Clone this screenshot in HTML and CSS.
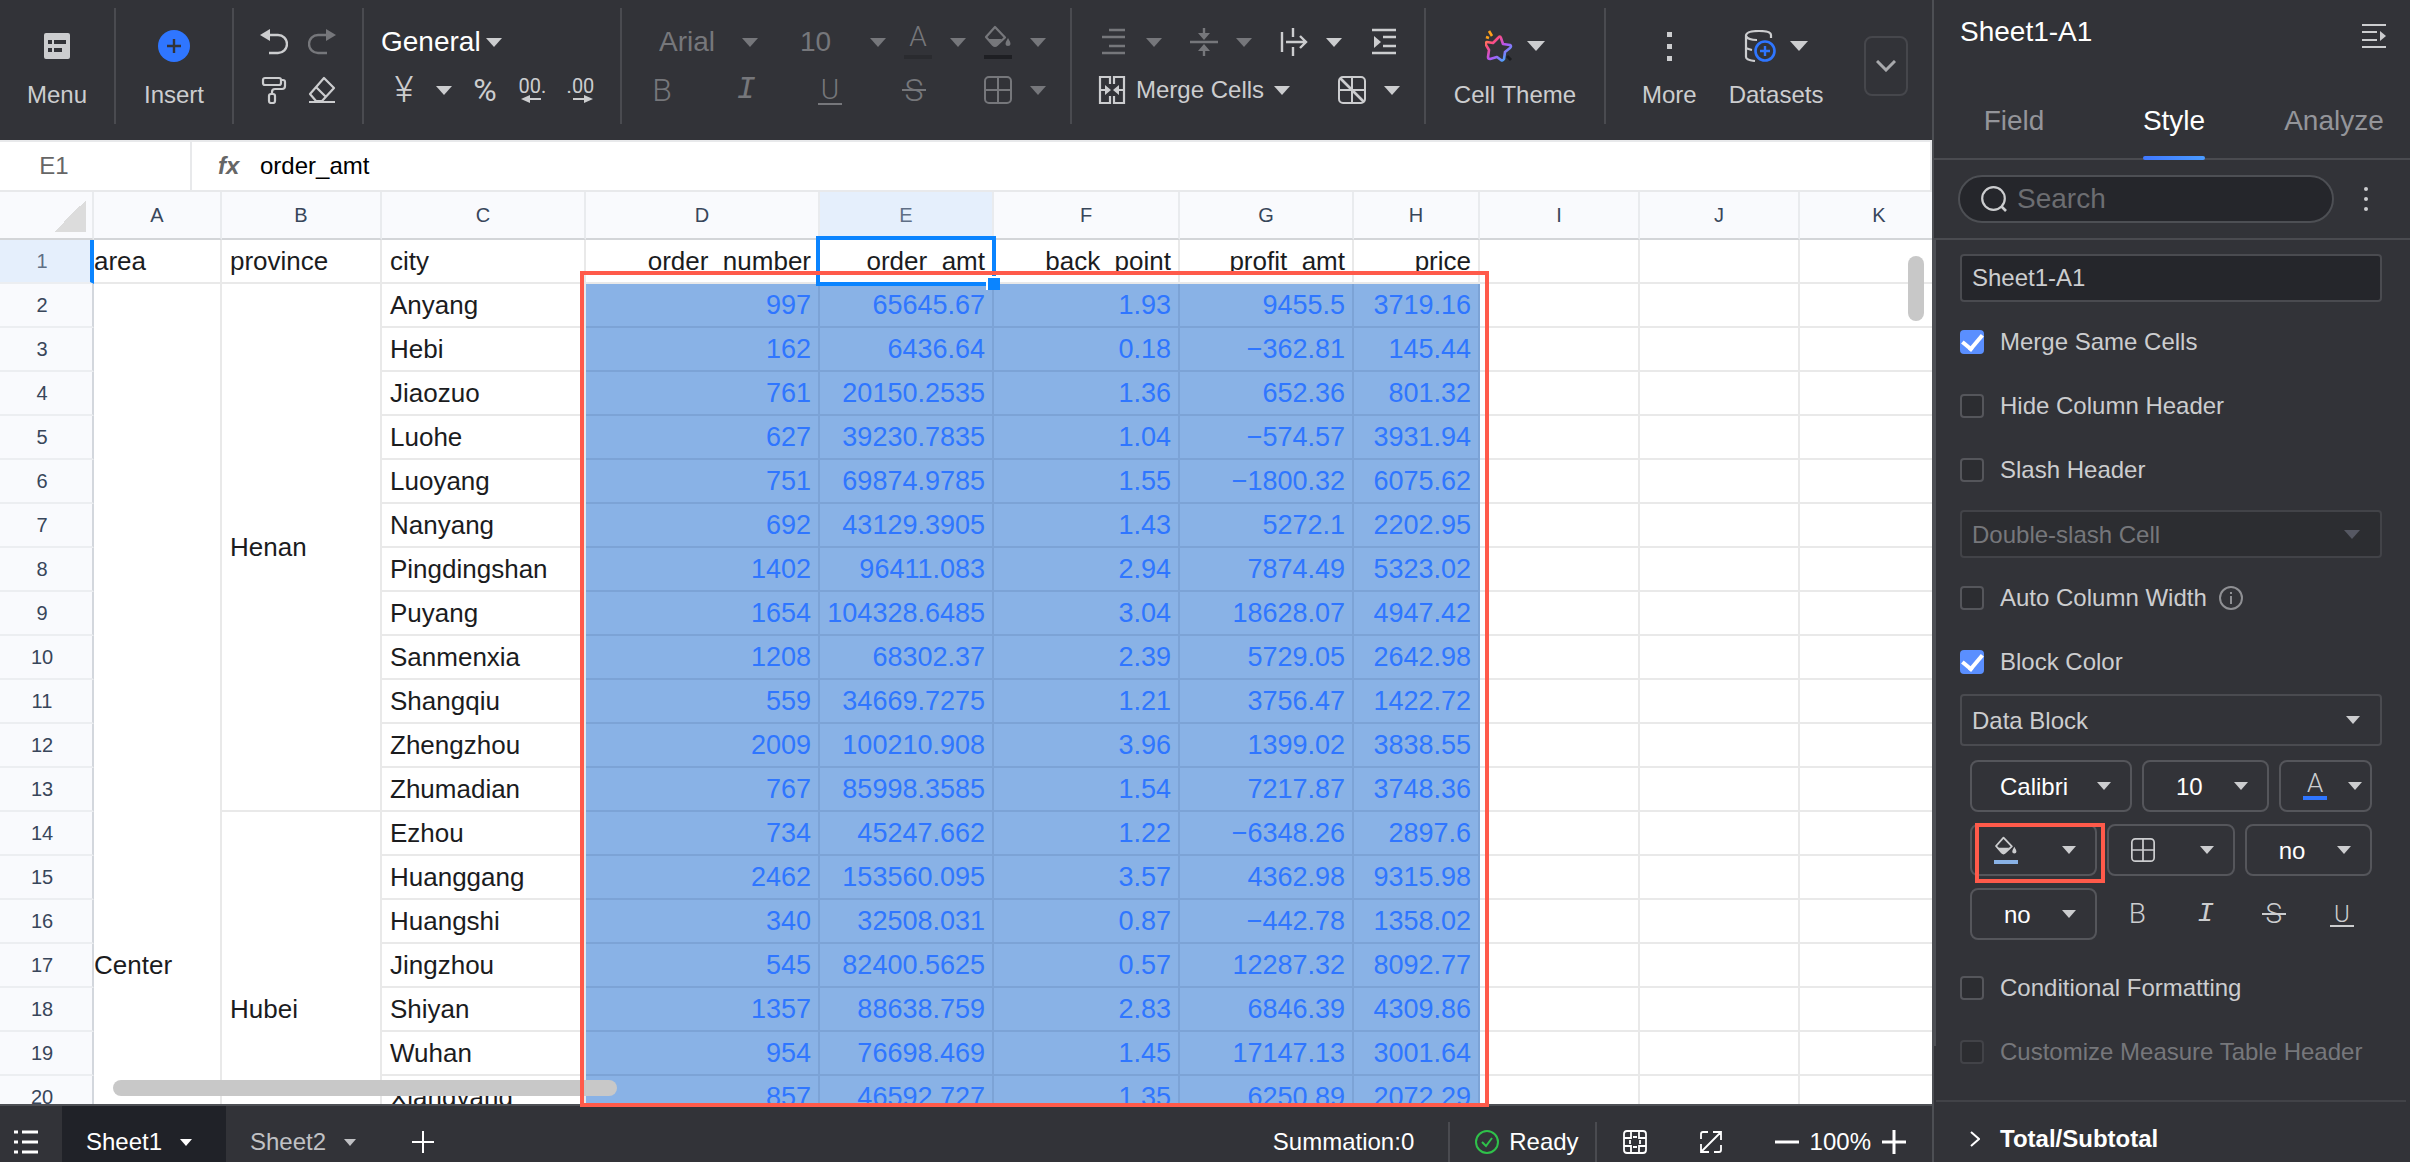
FILE: index.html
```html
<!DOCTYPE html>
<html lang="en">
<head>
    <meta charset="UTF-8">
    <meta name="viewport" content="width=device-width, initial-scale=1.0">
    <title>Sheet1</title>
    <link rel="stylesheet" href="styles.css">
</head>
<body>

    <!-- icon sprite -->
    <svg class="sprite" aria-hidden="true">
        <symbol id="i-menu" viewBox="0 0 28 28"><path fill="currentColor" fill-rule="evenodd" d="M3 1h22a2 2 0 0 1 2 2v22a2 2 0 0 1-2 2H3a2 2 0 0 1-2-2V3a2 2 0 0 1 2-2zM5 8v4h4V8zm6 0v4h12V8zM5 16v4h4v-4zm6 0v4h8v-4z"/></symbol>
        <symbol id="i-insert" viewBox="0 0 32 32"><circle cx="16" cy="16" r="16" fill="#2f76ff"/><path d="M16 9v14M9 16h14" stroke="#323338" stroke-width="2.4"/></symbol>
        <symbol id="i-undo" viewBox="0 0 28 28"><path d="M4 7h14a8.500 8.500 0 0 1 0 18h-9" fill="none" stroke="currentColor" stroke-width="2.4"/><path d="M0 7l10-6v12z" fill="currentColor"/></symbol>
        <symbol id="i-paint" viewBox="0 0 28 28"><g fill="none" stroke="currentColor" stroke-width="2.2"><rect x="3" y="2" width="18" height="7" rx="2"/><path d="M21 4h2q2 0 2 2v4q0 3-3 3h-7q-3 0-3 3v2"/><rect x="9" y="18" width="6" height="9" rx="2"/></g></symbol>
        <symbol id="i-eraser" viewBox="0 0 28 28"><g fill="none" stroke="currentColor" stroke-width="2.2" stroke-linejoin="round"><path d="M16 2l10 10-12 13H8l-6-7zM8 11l10 10M1 26h26"/></g></symbol>
        <symbol id="i-left" viewBox="0 0 28 8"><path d="M2 4l9-4v3h11v2H11v3z" fill="currentColor"/></symbol>
        <symbol id="i-right" viewBox="0 0 28 8"><path d="M26 4L17 0v3H6v2h11v3z" fill="currentColor"/></symbol>
        <symbol id="i-bucket" viewBox="0 0 28 24"><path d="M11 2l10 10.500-8 7.500q-2 2-4 0l-7-8z" fill="none" stroke="currentColor" stroke-width="2.200" stroke-linejoin="round"/><path d="M4 14h14l-5 6q-2 2-4 0zM24 13q5 8 0 8t0-8z" fill="currentColor"/></symbol>
        <symbol id="i-grid" viewBox="0 0 28 28"><path d="M5 1h18a4 4 0 0 1 4 4v18a4 4 0 0 1-4 4H5a4 4 0 0 1-4-4V5a4 4 0 0 1 4-4zM14 1v26M1 14h26" fill="none" stroke="currentColor" stroke-width="2"/></symbol>
        <symbol id="i-slash" viewBox="0 0 28 28"><use href="#i-grid"/><path d="M2 2l24 24" stroke="currentColor" stroke-width="2.600"/></symbol>
        <symbol id="i-align" viewBox="0 0 28 28"><path d="M9 2h16M2 9h23M9 18h16M2 25h23" stroke="currentColor" stroke-width="2.400"/></symbol>
        <symbol id="i-valign" viewBox="0 0 28 28"><path d="M0 14h28M14 0v6M14 22v6" stroke="currentColor" stroke-width="2.400"/><path d="M8 5h12l-6 7zM8 23h12l-6-7z" fill="currentColor"/></symbol>
        <symbol id="i-overflow" viewBox="0 0 28 28"><path d="M2 4v20M13 0v9M13 19v9M6 14h20M20 8l6 6-6 6" fill="none" stroke="currentColor" stroke-width="2.400"/></symbol>
        <symbol id="i-indent" viewBox="0 0 28 28"><path d="M2 2h24M13 9h13M13 18h13M2 25h24" stroke="currentColor" stroke-width="2.400"/><path d="M4 8l7 6-7 6z" fill="currentColor"/></symbol>
        <symbol id="i-merge" viewBox="0 0 28 28"><path d="M12 8V1H2v26h10v-7M16 8V1h10v26H16v-7M2 14h6M20 14h6" fill="none" stroke="currentColor" stroke-width="2.200"/><path d="M7 9l6 5-6 5zM21 9l-6 5 6 5z" fill="currentColor"/></symbol>
        <symbol id="i-theme" viewBox="0 0 28 32"><defs><linearGradient id="star" x1="0" y1="0" x2="1" y2="1"><stop offset="0" stop-color="#ff9a3c"/><stop offset=".25" stop-color="#ff4d7d"/><stop offset=".55" stop-color="#b455f5"/><stop offset="1" stop-color="#22c4ff"/></linearGradient></defs><path d="M13 8q2-3 3 0l2 6 7 1q2 1 0 3l-5 4-1 7q-1 2-3 1l-4-3-7 2q-2 0-2-2l1-7-3-5q-1-2 1-3l6 1z" fill="none" stroke="url(#star)" stroke-width="2.600" stroke-linejoin="round"/><path d="M4 1l3 5M1 7l3 1" stroke="#ffa21a" stroke-width="2.600"/><path d="M22 26l4 4" stroke="#1c1d20" stroke-width="3"/></symbol>
        <symbol id="i-data" viewBox="0 0 32 32"><g fill="none" stroke="currentColor" stroke-width="2.200"><path d="M27 8V5q0-4-12-4T2 5v22q0 3 9 4M2 6q2 4 11 4M2 18q2 1 6 2"/></g><circle cx="21" cy="21" r="9.500" fill="#323338" stroke="#2f76ff" stroke-width="2.600"/><path d="M21 16v10M16 21h10" stroke="#2f76ff" stroke-width="2.400"/></symbol>
        <symbol id="i-dots" viewBox="0 0 32 32"><path d="M14 2h5v5h-5zM14 14h5v5h-5zM14 26h5v5h-5z" fill="currentColor"/></symbol>
        <symbol id="i-chevron" viewBox="0 0 20 12"><path d="M1 1l9 9 9-9" fill="none" stroke="currentColor" stroke-width="3"/></symbol>
        <symbol id="i-next" viewBox="0 0 10 16"><path d="M1 1l8 7-8 7" fill="none" stroke="currentColor" stroke-width="2"/></symbol>
        <symbol id="i-fold" viewBox="0 0 24 24"><path d="M0 1h24M0 8h15M0 16h15M0 23h24" stroke="currentColor" stroke-width="2"/><path d="M18 7l6 5-6 5z" fill="currentColor"/></symbol>
        <symbol id="i-search" viewBox="0 0 26 26"><path d="M20 20l5 5" stroke="currentColor" stroke-width="2.600"/><circle cx="12.500" cy="12.500" r="11.300" fill="none" stroke="currentColor" stroke-width="2.200"/></symbol>
        <symbol id="i-vdots" viewBox="0 0 8 24"><circle cx="4" cy="2" r="2" fill="currentColor"/><circle cx="4" cy="12" r="2" fill="currentColor"/><circle cx="4" cy="22" r="2" fill="currentColor"/></symbol>
        <symbol id="i-info" viewBox="0 0 24 24"><circle cx="12" cy="12" r="11" fill="none" stroke="currentColor" stroke-width="2"/><path d="M12 6v2M12 10v8" stroke="currentColor" stroke-width="2"/></symbol>
        <symbol id="i-list" viewBox="0 0 24 24"><path d="M0 2h4M8 2h16M0 12h4M8 12h16M0 22h4M8 22h16" stroke="currentColor" stroke-width="3"/></symbol>
        <symbol id="i-plus" viewBox="0 0 24 24"><path d="M12 1v22M1 12h22" stroke="currentColor" stroke-width="2"/></symbol>
        <symbol id="i-more" viewBox="0 0 24 24"><path d="M12 0v24M0 12h24" stroke="currentColor" stroke-width="3"/></symbol>
        <symbol id="i-minus" viewBox="0 0 24 24"><path d="M0 12h24" stroke="currentColor" stroke-width="3"/></symbol>
        <symbol id="i-ok" viewBox="0 0 24 24"><path d="M7 12l4 4 6-8" fill="none" stroke="currentColor" stroke-width="2"/><circle cx="12" cy="12" r="11" fill="none" stroke="currentColor" stroke-width="2"/></symbol>
        <symbol id="i-freeze" viewBox="0 0 24 24"><path d="M4 1h16q3 0 3 3v16q0 3-3 3H4q-3 0-3-3V4q0-3 3-3zM8 1v7H1M16 1v7h7M8 23v-7H1M16 23v-7h7M10 7h4M10 17h4M7 10v4M17 10v4" fill="none" stroke="currentColor" stroke-width="1.800"/></symbol>
        <symbol id="i-expand" viewBox="0 0 24 24"><path d="M2 9V4q0-2 2-2h5M22 15v5q0 2-2 2h-5M14 2h8v8M22 2L2 22M10 22H2v-8" fill="none" stroke="currentColor" stroke-width="1.800"/></symbol>
    </svg>

    <div class="app">
        <main class="workspace">
            <header class="toolbar">
                <div class="group group-big">
                    <button class="big"><svg class="icon"><use href="#i-menu"/></svg><span>Menu</span></button>
                </div>
                <div class="group group-insert">
                    <button class="big"><svg class="icon icon-lg"><use href="#i-insert"/></svg><span>Insert</span></button>
                </div>
                <div class="group group-history">
                    <div class="row">
                        <button aria-label="Undo"><svg class="icon"><use href="#i-undo"/></svg></button>
                        <button class="off flip" aria-label="Redo"><svg class="icon"><use href="#i-undo"/></svg></button>
                    </div>
                    <div class="row">
                        <button aria-label="Format painter"><svg class="icon"><use href="#i-paint"/></svg></button>
                        <button aria-label="Clear"><svg class="icon"><use href="#i-eraser"/></svg></button>
                    </div>
                </div>
                <div class="group group-number">
                    <div class="row">
                        <label class="pick pick-general"><select aria-label="Number format"><option>General</option></select></label>
                    </div>
                    <div class="row row-number">
                        <button class="split" aria-label="Currency"><span class="glyph yen">¥</span><i class="caret"></i></button>
                        <button class="glyph percent">%</button>
                        <button class="decimal" aria-label="Fewer decimals"><span>00.</span><svg><use href="#i-left"/></svg></button>
                        <button class="decimal" aria-label="More decimals"><span>.00</span><svg><use href="#i-right"/></svg></button>
                    </div>
                </div>
                <div class="group group-font off">
                    <div class="row row-font">
                        <label class="pick pick-family"><select aria-label="Font" disabled><option>Arial</option></select></label>
                        <label class="pick pick-size"><select aria-label="Font size" disabled><option>10</option></select></label>
                        <button class="split" disabled><span class="swatch"><span class="glyph letter">A</span></span><i class="caret"></i></button>
                        <button class="split" disabled aria-label="Fill"><span class="swatch swatch-dark"><svg class="bucket"><use href="#i-bucket"/></svg></span><i class="caret"></i></button>
                    </div>
                    <div class="row row-marks">
                        <button class="glyph" disabled>B</button>
                        <button class="glyph slab" disabled>I</button>
                        <button class="glyph under" disabled>U</button>
                        <button class="glyph strike" disabled>S</button>
                        <button class="split" disabled aria-label="Borders"><svg class="icon"><use href="#i-grid"/></svg><i class="caret"></i></button>
                    </div>
                </div>
                <div class="group group-align">
                    <div class="row row-align">
                        <button class="split off" disabled aria-label="Align"><svg class="icon"><use href="#i-align"/></svg><i class="caret"></i></button>
                        <button class="split off" disabled aria-label="Vertical align"><svg class="icon"><use href="#i-valign"/></svg><i class="caret"></i></button>
                        <button class="split" aria-label="Overflow"><svg class="icon"><use href="#i-overflow"/></svg><i class="caret"></i></button>
                        <button aria-label="Indent"><svg class="icon"><use href="#i-indent"/></svg></button>
                    </div>
                    <div class="row row-merge">
                        <button class="merge"><svg class="icon"><use href="#i-merge"/></svg><span>Merge Cells</span><i class="caret"></i></button>
                        <button class="split" aria-label="Slash cell"><svg class="icon"><use href="#i-slash"/></svg><i class="caret"></i></button>
                    </div>
                </div>
                <div class="group group-theme">
                    <button class="big"><span class="pair"><svg class="star"><use href="#i-theme"/></svg><i class="caret caret-lg"></i></span><span>Cell Theme</span></button>
                </div>
                <div class="group group-more">
                    <button class="big"><svg class="icon icon-lg"><use href="#i-dots"/></svg><span>More</span></button>
                    <button class="big"><span class="pair"><svg class="icon icon-lg"><use href="#i-data"/></svg><i class="caret caret-lg"></i></span><span>Datasets</span></button>
                </div>
                <button class="collapse" aria-label="Collapse toolbar"><svg><use href="#i-chevron"/></svg></button>
            </header>

            <div class="formula">
                <input class="cell-name" aria-label="Cell" value="E1">
                <span class="fx">fx</span>
                <input class="cell-value" aria-label="Formula" value="order_amt">
            </div>

            <div class="grid">
                <div class="grid-view">
                    <table class="sheet">
                        <colgroup>
                            <col class="c-head"><col class="c-a"><col class="c-b"><col class="c-c"><col class="c-d"><col class="c-e"><col class="c-f"><col class="c-g"><col class="c-h"><col class="c-b"><col class="c-b"><col class="c-b">
                        </colgroup>
                        <thead>
                            <tr>
                                <th class="corner"></th><th>A</th><th>B</th><th>C</th><th>D</th><th class="active">E</th><th>F</th><th>G</th><th>H</th><th>I</th><th>J</th><th>K</th>
                            </tr>
                        </thead>
                        <tbody id="rows"></tbody>
                    </table>
                </div>
                <div class="thumb thumb-y"></div>
                <div class="thumb thumb-x"></div>
                <div class="mark mark-data"></div>
            </div>

            <footer class="status">
                <button class="sheets" aria-label="All sheets"><svg><use href="#i-list"/></svg></button>
                <button class="tab tab-on">Sheet1<i class="caret caret-sm"></i></button>
                <button class="tab">Sheet2<i class="caret caret-sm"></i></button>
                <button class="add" aria-label="Add sheet"><svg><use href="#i-plus"/></svg></button>
                <span class="sum">Summation:0</span>
                <span class="ready"><svg><use href="#i-ok"/></svg>Ready</span>
                <button aria-label="Freeze"><svg><use href="#i-freeze"/></svg></button>
                <button class="expand" aria-label="Full screen"><svg><use href="#i-expand"/></svg></button>
                <div class="zoom">
                    <button aria-label="Zoom out"><svg><use href="#i-minus"/></svg></button>
                    <span>100%</span>
                    <button aria-label="Zoom in"><svg><use href="#i-more"/></svg></button>
                </div>
            </footer>
        </main>

        <aside class="panel">
            <div class="panel-title">
                <h1>Sheet1-A1</h1>
                <button aria-label="Fold panel"><svg><use href="#i-fold"/></svg></button>
            </div>
            <nav class="panel-tabs">
                <a href="#field">Field</a>
                <a href="#style" class="on">Style</a>
                <a href="#analyze">Analyze</a>
            </nav>
            <div class="panel-search">
                <label class="search"><svg><use href="#i-search"/></svg><input type="text" placeholder="Search" aria-label="Search"></label>
                <button aria-label="More options"><svg><use href="#i-vdots"/></svg></button>
            </div>
            <div class="panel-body">
                <div class="line"><input class="field" aria-label="Name" value="Sheet1-A1"></div>
                <label class="line"><input type="checkbox" checked>Merge Same Cells</label>
                <label class="line"><input type="checkbox">Hide Column Header</label>
                <label class="line"><input type="checkbox">Slash Header</label>
                <div class="line"><label class="pick pick-box pick-off"><select aria-label="Slash type" disabled><option>Double-slash Cell</option></select></label></div>
                <label class="line"><input type="checkbox">Auto Column Width<svg class="info"><use href="#i-info"/></svg></label>
                <label class="line"><input type="checkbox" checked>Block Color</label>
                <label class="pick pick-box pick-block"><select aria-label="Block"><option>Data Block</option></select></label>

                <div class="formats">
                    <div class="format-row format-font">
                        <label class="pick pick-btn pick-font"><select aria-label="Block font"><option>Calibri</option></select></label>
                        <label class="pick pick-btn"><select aria-label="Block font size"><option>10</option></select></label>
                        <button class="drop drop-color"><span class="swatch swatch-blue"><span class="glyph letter">A</span></span><i class="caret caret-md"></i></button>
                    </div>
                    <div class="format-row">
                        <button class="drop" aria-label="Block fill"><span class="swatch swatch-light"><svg class="bucket"><use href="#i-bucket"/></svg></span><i class="caret caret-md"></i></button>
                        <button class="drop" aria-label="Block border"><svg class="square"><use href="#i-grid"/></svg><i class="caret caret-md"></i></button>
                        <label class="pick pick-btn"><select aria-label="Horizontal align"><option>no</option></select></label>
                        <div class="mark mark-fill"></div>
                    </div>
                    <div class="format-row">
                        <label class="pick pick-btn"><select aria-label="Vertical align"><option>no</option></select></label>
                        <div class="marks">
                            <button class="glyph">B</button>
                            <button class="glyph slab">I</button>
                            <button class="glyph strike">S</button>
                            <button class="glyph under">U</button>
                        </div>
                    </div>
                </div>

                <label class="line"><input type="checkbox">Conditional Formatting</label>
                <label class="line line-off"><input type="checkbox" disabled>Customize Measure Table Header</label>
            </div>
            <button class="panel-total"><svg><use href="#i-next"/></svg>Total/Subtotal</button>
        </aside>
    </div>

    <script src="sheet.js"></script>
</body>
</html>
```

FILE: styles.css
```css
* {
    box-sizing: border-box;
    margin: 0;
    padding: 0;
}
body {
    font-family: "Liberation Sans", Arial, sans-serif;
    font-size: 24px;
    color: #cccdcf;
    background: #323338;
}
button, input, select {
    font: inherit;
    color: inherit;
    background: none;
    border: none;
    outline: none;
}
button {
    display: flex;
    align-items: center;
    flex: none;
}
svg {
    display: block;
    flex: none;
    width: 24px;
    height: 24px;
}
.sprite {
    position: absolute;
    width: 0;
    height: 0;
}
.app {
    display: flex;
    height: 100vh;
    overflow: hidden;
}
.workspace {
    flex: 1;
    min-width: 0;
    display: flex;
    flex-direction: column;
}

/* shared bits */
.icon {
    width: 28px;
    height: 28px;
}
.icon-lg {
    width: 32px;
    height: 32px;
}
.caret {
    flex: none;
    border: 8px solid transparent;
    border-top: 9px solid currentColor;
    border-bottom: none;
}
.caret-lg {
    border-width: 10px 9px 0;
}
.caret-md {
    border-width: 8px 7px 0;
}
.caret-sm {
    border-width: 7px 6px 0;
}
.off {
    color: #76777b;
}
.pick {
    position: relative;
    display: block;
}
.pick select {
    appearance: none;
    width: 100%;
    height: 100%;
    opacity: 1;
}
.pick::after {
    content: "";
    position: absolute;
    top: 50%;
    right: 0;
    margin-top: -4px;
    border: 8px solid transparent;
    border-top: 9px solid currentColor;
    border-bottom: none;
    pointer-events: none;
}
.glyph {
    display: block;
    width: 28px;
    font-family: Roboto, sans-serif;
    font-weight: 300;
    font-size: 32px;
    line-height: 32px;
    text-align: center;
}
.slab {
    font-family: "Liberation Mono", monospace;
    font-style: italic;
}
.under {
    height: 30px;
    font-size: 28px;
    line-height: 26px;
    background: linear-gradient(currentColor, currentColor) center bottom / 24px 2px no-repeat;
}
.strike {
    background: linear-gradient(currentColor, currentColor) center / 24px 2px no-repeat;
}
.swatch {
    display: flex;
    flex-direction: column;
    align-items: center;
    justify-content: space-between;
    width: 28px;
    height: 34px;
    border-bottom: 4px solid #2a2b2f;
}
.swatch-dark {
    border-color: #1e1f23;
}
.swatch-blue {
    border-color: #2f76ff;
}
.swatch-light {
    border-color: #89b2e6;
}
.letter {
    font-size: 28px;
    line-height: 24px;
}
.bucket {
    width: 28px;
    height: 24px;
}

/* toolbar */
.toolbar {
    display: flex;
    flex: none;
    height: 140px;
    padding: 8px 24px 16px 0;
    white-space: nowrap;
}
.group {
    flex: none;
    padding-top: 10px;
    border-right: 2px solid #4a4b50;
}
.group-big, .group-insert, .group-theme, .group-more {
    display: flex;
    justify-content: center;
    padding-top: 22px;
}
.group-big {
    width: 116px;
}
.group-insert {
    width: 118px;
}
.group-history {
    width: 130px;
}
.group-number {
    width: 258px;
    padding-left: 17px;
}
.group-font {
    width: 450px;
}
.group-align {
    width: 354px;
    padding-left: 26px;
}
.group-theme {
    width: 180px;
}
.group-more {
    gap: 32px;
    padding-left: 36px;
    border-right: none;
}
.big {
    flex-direction: column;
    justify-content: flex-start;
    gap: 19px;
    line-height: 28px;
}
.big > .icon, .big > .pair {
    height: 32px;
}
.big > .icon:not(.icon-lg) {
    padding: 2px 0;
}
.pair {
    display: flex;
    align-items: center;
    gap: 14px;
}
.star {
    width: 28px;
    height: 32px;
}
.row {
    display: flex;
    align-items: center;
    height: 48px;
}
.group-history .row {
    justify-content: center;
    gap: 20px;
}
.flip {
    transform: scaleX(-1);
}
.split {
    gap: 18px;
}
.pick-general {
    width: 121px;
    font-size: 28px;
    color: #fff;
}
.pick-general::after {
    border-top-color: #cccdcf;
}
.row-number {
    padding-left: 9px;
    gap: 19px;
}
.yen {
    font-size: 36px;
}
.percent {
    font-weight: 400;
}
.decimal {
    flex-direction: column;
    width: 29px;
    font-family: Roboto, sans-serif;
    font-size: 20px;
    line-height: 18px;
}
.decimal svg {
    width: 28px;
    height: 8px;
}
.row-font {
    padding-left: 37px;
    gap: 18px;
    font-size: 28px;
}
.pick-family {
    width: 99px;
    margin-right: 24px;
}
.pick-size {
    width: 86px;
}
.row-marks {
    padding-left: 26px;
    gap: 56px;
}
.row-align {
    padding-left: 2px;
    gap: 28px;
}
.row-merge {
    gap: 50px;
}
.merge {
    width: 190px;
    gap: 10px;
}
.merge .caret {
    margin-left: auto;
}
.collapse {
    justify-content: center;
    width: 44px;
    height: 60px;
    margin: 28px 0 0 auto;
    border: 2px solid #46474c;
    border-radius: 8px;
    color: #a8a9ac;
}
.collapse svg {
    width: 20px;
    height: 12px;
}

/* formula bar */
.formula {
    display: flex;
    flex: none;
    align-items: center;
    height: 52px;
    background: #fff;
    color: #000;
    border: solid #e8e9eb;
    border-width: 2px 2px 2px 0;
}
.cell-name {
    width: 192px;
    height: 100%;
    padding-right: 82px;
    border-right: 2px solid #e8e9eb;
    text-align: center;
    color: #666;
}
.fx {
    width: 68px;
    padding-left: 26px;
    font-style: italic;
    font-weight: bold;
    color: #666;
}
.cell-value {
    flex: 1;
}

/* grid */
.grid {
    position: relative;
    flex: 1;
    min-height: 0;
    background: #fff;
}
.grid-view {
    height: 100%;
    overflow: hidden;
}
.sheet {
    table-layout: fixed;
    width: 1960px;
    border-collapse: separate;
    border-spacing: 0;
    font-size: 26px;
    color: #1b1c1e;
}
.c-head { width: 94px; }
.c-a { width: 128px; }
.c-b { width: 160px; }
.c-c { width: 204px; }
.c-d { width: 234px; }
.c-e { width: 174px; }
.c-f { width: 186px; }
.c-g { width: 174px; }
.c-h { width: 126px; }
.sheet th {
    font-size: 20px;
    font-weight: normal;
    color: #38465a;
    background: #f9fafd;
    border-right: 2px solid #e9ebee;
    border-bottom: 2px solid #d3d5d8;
}
.sheet thead th {
    height: 48px;
}
.sheet tbody th {
    padding-right: 8px;
    border-right-color: #d3d7dd;
    border-bottom-color: #eceef1;
}
.sheet .active {
    background: #e5effc;
    color: #5f6f85;
}
.sheet tbody .active {
    padding-right: 6px;
    border-right: 4px solid #0a84ff;
}
.sheet .corner {
    background: linear-gradient(135deg, transparent 50%, #dcdcdc 50%) 54px 8px / 32px 32px no-repeat #f9fafd;
}
.sheet td {
    height: 44px;
    padding: 0 7px 0 8px;
    border-right: 2px solid #e9e9e9;
    border-bottom: 2px solid #e9e9e9;
    white-space: nowrap;
}
.sheet .area {
    padding-left: 0;
}
.sheet .num {
    text-align: right;
}
.sheet .data {
    font-size: 27px;
    text-align: right;
    color: #2f76ff;
    background: #89b2e6;
    border-color: #7ca3d6;
    padding-left: 0;
}
.selected {
    position: relative;
}
.selected::before {
    content: "";
    position: absolute;
    z-index: 1;
    inset: -4px;
    border: 4px solid #0a84ff;
}
.selected::after {
    content: "";
    position: absolute;
    z-index: 1;
    right: -8px;
    bottom: -8px;
    width: 12px;
    height: 12px;
    background: #0a84ff;
    border: solid #fff;
    border-width: 2px 0 0 2px;
}
.thumb {
    position: absolute;
    border-radius: 8px;
    background: #c8c8c8;
}
.thumb-y {
    top: 64px;
    right: 8px;
    width: 16px;
    height: 65px;
}
.thumb-x {
    left: 113px;
    bottom: 8px;
    width: 504px;
    height: 16px;
}
.mark {
    position: absolute;
    z-index: 2;
    border: 4px solid #ff5a4a;
    pointer-events: none;
}
.mark-data {
    left: 580px;
    top: 79px;
    bottom: -3px;
    width: 909px;
}
.mark-fill {
    left: 5px;
    top: 5px;
    width: 130px;
    height: 60px;
}

/* status bar */
.status {
    display: flex;
    flex: none;
    align-items: flex-end;
    height: 58px;
    border-top: 2px solid #4d4f54;
    color: #fff;
    padding-right: 26px;
}
.status > * {
    display: flex;
    align-items: center;
    height: 40px;
}
.sheets {
    width: 62px;
    padding-left: 14px;
}
.status .tab {
    justify-content: space-between;
    width: 164px;
    height: 100%;
    padding: 16px 34px 0 24px;
    color: #c0c1c4;
}
.status .tab-on {
    color: #fff;
    background: #202228;
}
.add {
    margin-left: 21px;
}
.sum {
    margin-left: auto;
    margin-right: 34px;
}
.ready {
    gap: 10px;
    padding: 0 16px 0 25px;
    margin-right: 26px;
    border: solid #4a4b50;
    border-width: 0 2px;
}
.ready svg {
    color: #2fc14a;
}
.expand {
    margin: 0 52px;
}
.zoom {
    gap: 11px;
}

/* right panel */
.panel {
    display: flex;
    flex-direction: column;
    flex: none;
    width: 478px;
    border-left: 2px solid #4d4f54;
    overflow: hidden;
}
.panel-title {
    display: flex;
    justify-content: space-between;
    padding: 16px 24px 0 26px;
    height: 80px;
}
.panel-title h1 {
    font-size: 28px;
    font-weight: normal;
    line-height: 32px;
    color: #fff;
}
.panel-title button {
    height: 40px;
}
.panel-tabs {
    display: flex;
    height: 80px;
    border-bottom: 2px solid #4a4b50;
    font-size: 28px;
}
.panel-tabs a {
    display: flex;
    flex: none;
    width: 160px;
    justify-content: center;
    line-height: 82px;
    height: 78px;
    color: #94959a;
    text-decoration: none;
}
.panel-tabs .on {
    position: relative;
    color: #fff;
}
.panel-tabs .on::after {
    content: "";
    position: absolute;
    bottom: -2px;
    width: 62px;
    height: 4px;
    border-radius: 2px;
    background: linear-gradient(90deg, #4078ff, #4a9bff);
}
.panel-search {
    display: flex;
    align-items: center;
    height: 80px;
    padding: 0 40px 0 24px;
    gap: 28px;
    border-bottom: 2px solid #4a4b50;
}
.search {
    display: flex;
    flex: 1;
    align-items: center;
    gap: 10px;
    height: 48px;
    min-width: 0;
    padding: 0 21px;
    border: 2px solid #4d4f54;
    border-radius: 24px;
    background: #25262b;
    font-size: 28px;
}
.search svg {
    width: 26px;
    height: 26px;
}
.search input {
    flex: 1;
    min-width: 0;
}
.search input::placeholder {
    color: #6c6d71;
}
.panel-search button svg {
    width: 8px;
}
.panel-body {
    height: 806px;
    padding: 6px 28px 0 24px;
    border-left: 2px solid #4d4f54;
}
.line {
    display: flex;
    align-items: center;
    height: 64px;
    gap: 16px;
}
.line-off {
    color: #76777b;
}
.field {
    width: 100%;
    height: 48px;
    padding: 0 10px;
    border: 2px solid #4a4b50;
    border-radius: 4px;
    background: #25262b;
}
.line input[type="checkbox"] {
    appearance: none;
    flex: none;
    width: 24px;
    height: 24px;
    border: 2px solid #55565b;
    border-radius: 4px;
    background: #2c2d31;
}
.line input[type="checkbox"]:checked {
    display: grid;
    place-items: center;
    border: none;
    background: #5a8fff;
}
.line input:checked::before {
    content: "";
    width: 9px;
    height: 16px;
    margin-bottom: 4px;
    border: solid #fff;
    border-width: 0 4px 4px 0;
    rotate: 40deg;
}
.line input[type="checkbox"]:disabled {
    border-color: #424348;
}
.info {
    margin-left: -4px;
    color: #8f9094;
}
.pick-box {
    width: 100%;
    height: 48px;
    border: 2px solid #4a4b50;
    border-radius: 4px;
}
.pick-box select {
    padding: 0 10px;
}
.pick-box::after {
    right: 20px;
}
.pick-off {
    color: #76777b;
    background: #2c2d31;
    border-color: #424348;
}
.pick-off::after {
    color: #565863;
}
.pick-block {
    height: 52px;
}
.pick-block::after, .pick-btn::after {
    border-width: 8px 7px 0;
}
.formats {
    padding: 8px 10px 10px;
}
.format-row {
    position: relative;
    display: grid;
    grid-template-columns: repeat(3, 1fr);
    align-items: center;
    gap: 10px;
    height: 64px;
}
.format-font {
    grid-template-columns: 162px 1fr 93px;
}
.pick-btn, .drop {
    height: 52px;
    border: 2px solid #55565b;
    border-radius: 8px;
}
.pick-btn {
    color: #fff;
}
.pick-btn select {
    padding-left: 32px;
}
.pick-btn::after {
    right: 19px;
    color: #cccdcf;
}
.pick-font select {
    padding-left: 28px;
}
.drop {
    justify-content: space-between;
    padding: 0 19px 0 22px;
}
.drop-color {
    padding-right: 8px;
}
.drop .swatch {
    width: 24px;
    height: 28px;
}
.drop .bucket {
    width: 24px;
    height: 20px;
}
.drop .letter {
    font-size: 26px;
    line-height: 22px;
}
.marks {
    display: flex;
    grid-column: span 2;
    align-items: center;
    justify-content: space-between;
    padding: 0 16px;
    height: 52px;
}
.marks .glyph {
    font-size: 28px;
}
.marks .under {
    font-size: 24px;
    line-height: 22px;
    height: 26px;
}
.panel-total {
    flex: 1;
    gap: 20px;
    margin: 54px 4px 0 2px;
    padding: 14px 0 0 34px;
    border-top: 2px solid #424348;
    color: #fff;
    font-weight: bold;
}
.panel-total svg {
    width: 10px;
    height: 16px;
}
```

FILE: sheet.js
```js
const header = ['area', 'province', 'city', 'order_number', 'order_amt', 'back_point', 'profit_amt', 'price'];

const data = [
    ['Anyang', '997', '65645.67', '1.93', '9455.5', '3719.16'],
    ['Hebi', '162', '6436.64', '0.18', '−362.81', '145.44'],
    ['Jiaozuo', '761', '20150.2535', '1.36', '652.36', '801.32'],
    ['Luohe', '627', '39230.7835', '1.04', '−574.57', '3931.94'],
    ['Luoyang', '751', '69874.9785', '1.55', '−1800.32', '6075.62'],
    ['Nanyang', '692', '43129.3905', '1.43', '5272.1', '2202.95'],
    ['Pingdingshan', '1402', '96411.083', '2.94', '7874.49', '5323.02'],
    ['Puyang', '1654', '104328.6485', '3.04', '18628.07', '4947.42'],
    ['Sanmenxia', '1208', '68302.37', '2.39', '5729.05', '2642.98'],
    ['Shangqiu', '559', '34669.7275', '1.21', '3756.47', '1422.72'],
    ['Zhengzhou', '2009', '100210.908', '3.96', '1399.02', '3838.55'],
    ['Zhumadian', '767', '85998.3585', '1.54', '7217.87', '3748.36'],
    ['Ezhou', '734', '45247.662', '1.22', '−6348.26', '2897.6'],
    ['Huanggang', '2462', '153560.095', '3.57', '4362.98', '9315.98'],
    ['Huangshi', '340', '32508.031', '0.87', '−442.78', '1358.02'],
    ['Jingzhou', '545', '82400.5625', '0.57', '12287.32', '8092.77'],
    ['Shiyan', '1357', '88638.759', '2.83', '6846.39', '4309.86'],
    ['Wuhan', '954', '76698.469', '1.45', '17147.13', '3001.64'],
    ['Xiangyang', '857', '46592.727', '1.35', '6250.89', '2072.29']
];

// merged cells: sheet row -> [text, number of rows]
const areas = { 2: ['Center', 31] };
const provinces = { 2: ['Henan', 12], 14: ['Hubei', 9], 23: ['', 10] };
const lastRow = 32;

const body = document.getElementById('rows');

function addCell(tr, text, className, rowSpan) {
    const td = document.createElement('td');
    td.textContent = text;
    if (className) td.className = className;
    if (rowSpan) td.rowSpan = rowSpan;
    tr.appendChild(td);
}

for (let n = 1; n <= lastRow; n++) {
    const tr = document.createElement('tr');
    const th = document.createElement('th');
    th.textContent = n;
    if (n === 1) th.className = 'active';
    tr.appendChild(th);

    if (n === 1) {
        header.forEach((name, i) => {
            let cls = i === 0 ? 'area' : i > 2 ? 'num' : '';
            if (name === 'order_amt') cls += ' selected';
            addCell(tr, name, cls);
        });
    } else {
        if (areas[n]) addCell(tr, areas[n][0], 'area', areas[n][1]);
        if (provinces[n]) addCell(tr, provinces[n][0], '', provinces[n][1]);
        const row = data[n - 2] || ['', '', '', '', '', ''];
        row.forEach((value, i) => addCell(tr, value, i > 0 ? 'data' : ''));
    }

    // I, J, K
    for (let i = 0; i < 3; i++) addCell(tr, '');
    body.appendChild(tr);
}
```
